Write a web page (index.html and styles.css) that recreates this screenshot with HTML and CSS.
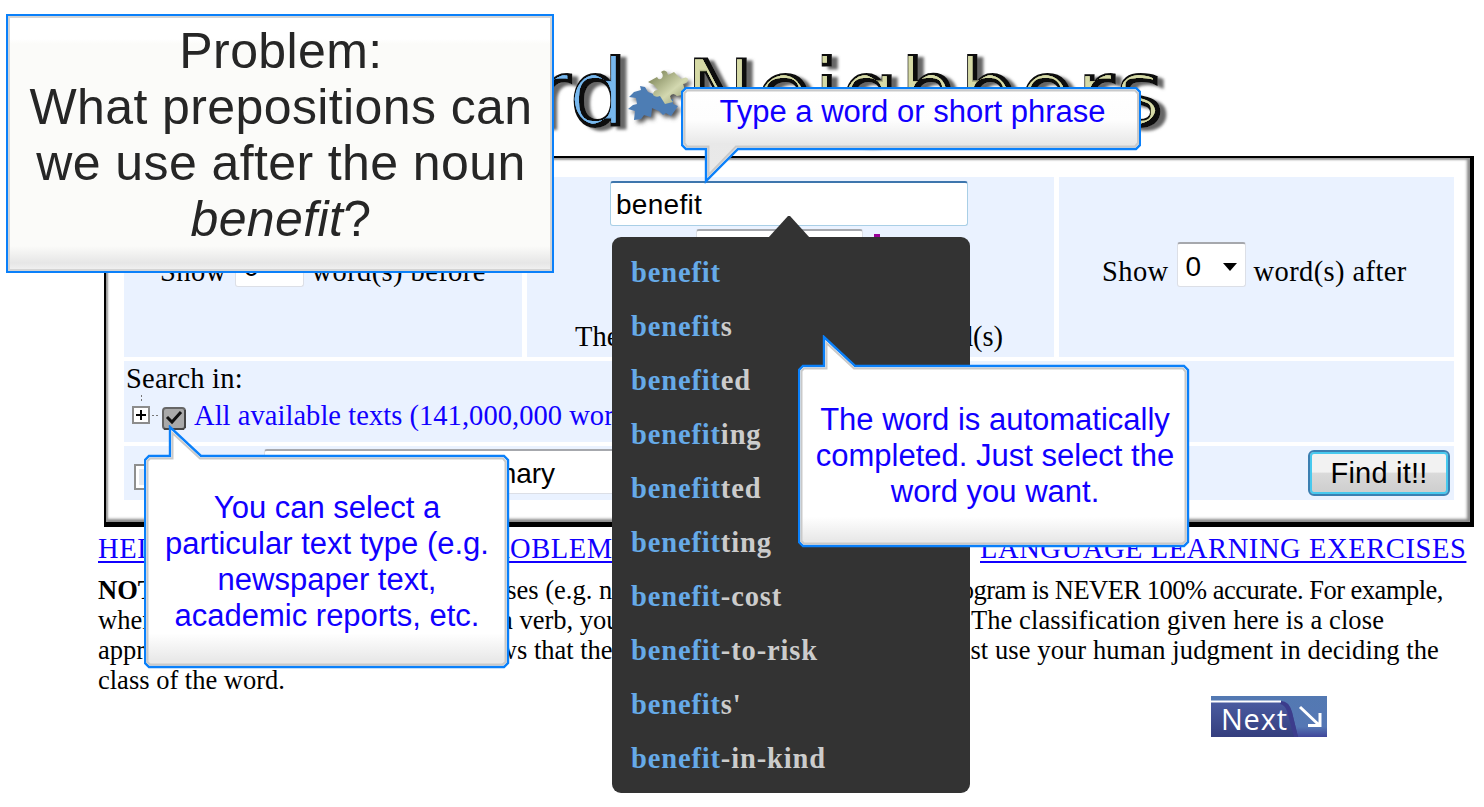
FILE: index.html
```html
<!DOCTYPE html>
<html lang="en">
<head>
<meta charset="utf-8">
<title>Word Neighbors</title>
<link rel="stylesheet" href="styles.css">
</head>
<body>
<div class="page">
  <header class="banner">
    <svg class="logo" width="1484" height="156" viewBox="0 0 1484 156" aria-label="Word Neighbors">
      <defs>
        <filter id="bevelBlue" x="-5%" y="-10%" width="112%" height="130%">
          <feOffset in="SourceAlpha" dx="6" dy="3" result="so"/>
          <feGaussianBlur in="so" stdDeviation="1.8" result="sb"/>
          <feFlood flood-color="#666"/><feComposite in2="sb" operator="in" result="shadow"/>
          <feMorphology in="SourceAlpha" operator="erode" radius="3" result="er"/>
          <feOffset in="er" dx="-1.6" dy="-1" result="eo"/>
          <feGaussianBlur in="eo" stdDeviation="0.6" result="eb"/>
          <feFlood flood-color="#78b8ee"/><feComposite in2="eb" operator="in" result="light"/>
          <feMerge><feMergeNode in="shadow"/><feMergeNode in="SourceGraphic"/><feMergeNode in="light"/><feMergeNode in="light"/></feMerge>
        </filter>
        <filter id="bevelOlive" x="-5%" y="-10%" width="112%" height="130%">
          <feOffset in="SourceAlpha" dx="6" dy="3" result="so"/>
          <feGaussianBlur in="so" stdDeviation="1.8" result="sb"/>
          <feFlood flood-color="#666"/><feComposite in2="sb" operator="in" result="shadow"/>
          <feMorphology in="SourceAlpha" operator="erode" radius="3" result="er"/>
          <feOffset in="er" dx="-1.6" dy="-1" result="eo"/>
          <feGaussianBlur in="eo" stdDeviation="0.6" result="eb"/>
          <feFlood flood-color="#d6daa6"/><feComposite in2="eb" operator="in" result="light"/>
          <feMerge><feMergeNode in="shadow"/><feMergeNode in="SourceGraphic"/><feMergeNode in="light"/><feMergeNode in="light"/></feMerge>
        </filter>
        <filter id="soft" x="-20%" y="-20%" width="150%" height="150%"><feDropShadow dx="3" dy="3" stdDeviation="2" flood-color="#555"/></filter>
        <linearGradient id="po" x1="0" y1="0" x2="1" y2="1"><stop offset="0" stop-color="#70784a"/><stop offset=".6" stop-color="#d3d8b0"/><stop offset="1" stop-color="#8c9268"/></linearGradient>
      </defs>
      <text class="logo-text" filter="url(#bevelBlue)" x="628" y="126" text-anchor="end">Word</text>
      <text class="logo-text" filter="url(#bevelOlive)" x="686" y="126" textLength="478">Neighbors</text>
      <g filter="url(#soft)">
        <path fill="#4d7db4" d="M634 92l7-2-1-4 5 1 3 5 22 8 3-1v5l5 2-7 10-5-3-3 2-4-4-7-3-1 9-7-2-3 4-7 1 1-9-7-2 5-4 4-1-1-6-7-1z"/>
        <path fill="url(#po)" d="M648 82l9-5q2 4 5 1 2-3-1-6 3-3 6 0l1 3 6-3 7 7q6-3 7 0 0 4-5 5l3 10-9 2q-4-4-7 0 0 3 3 6l-8 2-5-8q-4 2-7-1 0-5 5-5l-4-5z"/>
      </g>
    </svg>
  </header>

  <main class="panel">
    <section class="cell cell-before">
      <div class="show-line before-line"><span>Show</span><span class="select small">0<i class="caret"></i></span><span>word(s) before</span></div>
    </section>
    <section class="cell cell-word">
      <div class="word-input">benefit</div>
      <div class="pos-line"><span class="pos-select"></span><i class="pos-mark"></i></div>
      <div class="the-line"><span>The</span><span>word(s)</span></div>
    </section>
    <section class="cell cell-after">
      <div class="show-line after-line"><span>Show</span><span class="select small">0<i class="caret"></i></span><span>word(s) after</span></div>
    </section>
    <section class="cell cell-search">
      <div class="search-label">Search in:</div>
      <div class="tree-line">
        <svg width="64" height="38" viewBox="0 0 64 38">
          <path d="M17.500 0v8" stroke="#777" stroke-dasharray="2 2"/>
          <rect x="9" y="12" width="16" height="16" fill="#fff" stroke="#8c8c8c" stroke-width="2"/>
          <path d="M12 20h10M17 15v10" stroke="#000" stroke-width="2"/>
          <path d="M28 20.500h8" stroke="#777" stroke-dasharray="2 2"/>
          <rect x="39" y="13" width="22" height="21" rx="3" fill="#a9a9a9" stroke="#666" stroke-width="2"/>
          <path d="M40 34h20M61 15v18" stroke="#444" stroke-width="2"/>
          <path d="M43 22l5 5 9-10" fill="none" stroke="#111" stroke-width="3"/>
        </svg>
        <a>All available texts (141,000,000 words)</a>
      </div>
    </section>
    <section class="cell cell-find">
      <span class="box"></span>
      <span class="select wide">summary</span>
      <button class="find">Find it!!</button>
    </section>
  </main>

  <nav class="links"><a class="l1">HELP</a><a class="l2">PROBLEMS</a><a class="l3">LANGUAGE LEARNING EXERCISES</a></nav>

  <div class="note">
    <div class="row r1"><b>NOTE:</b><span>classes (e.g. n</span><span>program is NEVER 100% accurate. For example,</span></div>
    <div class="row r2"><span>when</span><span>a verb, you</span><span>The classification given here is a close</span></div>
    <div class="row r3"><span>appro</span><span>shows that the</span><span>must use your human judgment in deciding the</span></div>
    <div class="row r4">class of the word.</div>
  </div>

  <a class="next"><svg width="116" height="41" viewBox="0 0 116 41">
    <defs>
      <linearGradient id="n1" x1="0" y1="0" x2="0" y2="1"><stop offset="0" stop-color="#4a5ba0"/><stop offset="1" stop-color="#343e7e"/></linearGradient>
      <linearGradient id="n2" x1="0" y1="0" x2="0" y2="1"><stop offset="0" stop-color="#5379b2"/><stop offset=".75" stop-color="#5577b4"/><stop offset="1" stop-color="#40469a"/></linearGradient>
    </defs>
    <rect width="116" height="41" fill="url(#n2)"/>
    <path d="M0 6h70q8 0 11 10l6 25H0z" fill="url(#n1)"/>
    <path d="M70 5q8 0 11 11l6 25h-4l-7-26q-2-6-7-7z" fill="#3c3c8c"/>
    <path d="M0 5.500h70" stroke="#fff" stroke-width="2"/>
    <path d="M89 11l19 18M109 17v12.500H97" fill="none" stroke="#fff" stroke-width="3"/>
    <text x="10" y="34" class="next-text" textLength="66">Next</text>
  </svg></a>

  <div class="suggest">
    <svg class="suggest-tip" width="42" height="22" viewBox="0 0 42 22"><path d="M0 22L20 0h2L42 22z" fill="#333"/></svg>
    <ul>
      <li><em>benefit</em></li><li><em>benefit</em>s</li><li><em>benefit</em>ed</li><li><em>benefit</em>ing</li><li><em>benefit</em>ted</li><li><em>benefit</em>ting</li><li><em>benefit</em>-cost</li><li><em>benefit</em>-to-risk</li><li><em>benefit</em>s'</li><li><em>benefit</em>-in-kind</li>
    </ul>
  </div>

  <div class="problem">Problem:<br>What prepositions can<br>we use after the noun<br><i>benefit</i>?</div>

  <div class="callout c-type">
    <svg width="460" height="97" viewBox="0 0 460 97">
      <defs><linearGradient id="g" x1="0" y1="0" x2="0" y2="1"><stop offset="0" stop-color="#fff"/><stop offset=".35" stop-color="#fdfdfd"/><stop offset=".6" stop-color="#e8e8e8"/><stop offset="1" stop-color="#eaeaea"/></linearGradient></defs>
      <path class="edge" fill="url(#g)" d="M5 1H455l4 4V58l-4 4H57L25 94V62H5l-4-4V5z"/>
      <path class="inner" d="M6 3.500H454l3 3V56l-3 3.500H55L27.500 88V59.500H6L3.500 56V6z"/>
    </svg>
    <p>Type a word or short phrase</p>
  </div>
  <div class="callout c-text">
    <svg width="366" height="244" viewBox="0 0 366 244">
      <defs><linearGradient id="g2" x1="0" y1="0" x2="0" y2="1"><stop offset=".86" stop-color="#fff"/><stop offset=".97" stop-color="#e9e9e9"/></linearGradient></defs>
      <path class="edge" fill="url(#g2)" d="M5 31H26V2L57 31H360l4 4V238l-4 4H5l-4-4V35z"/>
      <path class="inner" d="M6 33.500H28.500V8L56 33.500H359l2.500 3V237l-3 2.500H6L3.500 237V36z"/>
    </svg>
    <p>You can select a<br>particular text type (e.g.<br>newspaper text,<br>academic reports, etc.</p>
  </div>
  <div class="callout c-auto">
    <svg width="392" height="213" viewBox="0 0 392 213">
      <path class="edge" fill="url(#g2)" d="M5 31H26V2L57 31H386l4 4V207l-4 4H5l-4-4V35z"/>
      <path class="inner" d="M6 33.500H28.500V8L56 33.500H385l2.500 3V206l-3 2.500H6L3.500 206V36z"/>
    </svg>
    <p>The word is automatically<br>completed. Just select the<br>word you want.</p>
  </div>
</div>
</body>
</html>
```
FILE: styles.css
```css
* { box-sizing: border-box; }
body { margin: 0; background: #fff; }
.page { position: relative; width: 1484px; height: 807px; overflow: hidden; font-family: "Liberation Serif", "Times New Roman", serif; font-size: 28.5px; line-height: 34px; color: #000; white-space: nowrap; }
.banner { height: 156px; }
.logo { display: block; }
.logo-text { font-family: "DejaVu Sans", sans-serif; font-size: 92px; fill: #080808; stroke: #080808; stroke-width: 1.8; }

.panel {
  margin-left: 104px; width: 1370px; height: 371px; padding: 19px 16px 21px 18px;
  border: solid #000; border-width: 2px 4px 5px 2px;
  box-shadow: inset 0 2px 2px #999, inset 2px 0 2px #999, inset -3px -3px 3px #888;
  display: grid; grid-template-columns: 398px 527px 395px; grid-template-rows: 180px 81px 54px; column-gap: 5px; row-gap: 4px;
}
.cell { background: #eaf2ff; overflow: hidden; }
.cell-search, .cell-find { grid-column: 1 / 4; }
.show-line { display: flex; align-items: flex-start; height: 45px; letter-spacing: .4px; }
.show-line > span { padding-top: 13px; }
.before-line { margin: 65px 0 0 36px; }
.after-line { margin: 65px 0 0 43px; }
.select { background: #fff; border: 1px solid #dcdfe6; border-top: 2px solid #a6a8ad; border-radius: 3px; font-family: "Liberation Sans", Arial, sans-serif; font-size: 28px; letter-spacing: 0; }
.show-line > .small { display: flex; width: 69px; height: 45px; margin: 0 8px; padding: 5px 8px 0 8px; justify-content: space-between; line-height: 36px; }
.caret { width: 0; height: 0; border: 7px solid transparent; border-top: 8px solid #000; border-bottom: 0; margin-top: 14px; }
.word-input { margin: 4px 0 0 83px; width: 358px; height: 45px; padding: 2px 0 0 5px; background: #fff; border: 1px solid #a9cfe6; border-top: 2px solid #3e76ad; border-radius: 3px; font: 28px/40px "Liberation Sans", Arial, sans-serif; letter-spacing: .3px; }
.pos-line { display: flex; margin: 3px 0 0 169px; height: 45px; }
.pos-select { width: 167px; background: #fff; border: 1px solid #dcdfe6; border-top: 2px solid #a6a8ad; border-radius: 3px; }
.pos-mark { width: 6px; height: 20px; margin: 5px 0 0 11px; background: #909; }
.the-line { display: flex; justify-content: space-between; margin: 46px 51px 0 48px; }
.search-label { padding: 1px 0 0 2px; height: 34px; letter-spacing: .2px; }
.tree-line { display: flex; height: 38px; }
.tree-line a { color: #10f; margin-left: 6px; padding-top: 4px; letter-spacing: .05px; }
.cell-find { display: flex; }
.box { flex: none; width: 26px; height: 26px; margin: 18px 0 0 10px; background: #e4e8ee; border: 2px solid #8e8f8f; box-shadow: inset 0 0 0 3px #fff; }
.wide { margin: 3px 0 0 104px; width: 500px; height: 45px; padding-left: 175px; line-height: 46px; }
.find { margin: 4px 4px 0 auto; width: 142px; height: 46px; padding: 0; border: 2px solid #3c7fb1; border-radius: 6px; box-shadow: inset 0 0 0 2px #48c9ee; background: linear-gradient(#f2f2f2 0 48%, #dadada 50%, #cdcdcd); font: 29px/38px "Liberation Sans", Arial, sans-serif; letter-spacing: .2px; color: #000; }

.links { display: grid; grid-template-columns: 376px 506px 1fr; margin: 5px 0 0 98px; font-size: 28.5px; line-height: 34px; letter-spacing: .6px; color: #10f; text-decoration: underline; text-decoration-thickness: 2px; text-underline-offset: 3px; }
.note { margin: 9px 0 0 98px; width: 1345px; font-size: 26.5px; line-height: 30px; }
.row { display: grid; grid-template-columns: 355px 455px 535px; }
.row > :nth-child(3) { justify-self: end; }
.row > :nth-child(2) { justify-self: start; }
.r1 > :nth-child(2) { padding-left: 12px; }
.r1 > :nth-child(3) { letter-spacing: -.5px; }
.r2 > :nth-child(2) { padding-left: 48px; }
.r2 > :nth-child(3) { padding-right: 59px; letter-spacing: .1px; }
.r3 > :nth-child(2) { padding-left: 8px; }
.r3 > :nth-child(3) { padding-right: 4px; letter-spacing: .1px; }
.next { position: absolute; left: 1211px; top: 696px; line-height: 0; }
.next-text { font-family: "Open Sans", "Noto Sans", sans-serif; font-size: 29px; fill: #fff; }

.suggest { position: absolute; left: 612px; top: 237px; width: 358px; height: 556px; background: #333; border-radius: 9px; }
.suggest-tip { position: absolute; left: 156px; top: -21px; }
.suggest ul { list-style: none; margin: 0; padding: 9px 0 0 19px; }
.suggest li { height: 54px; line-height: 54px; font-size: 28.5px; font-weight: bold; letter-spacing: .85px; color: #ccc; }
.suggest em { font-style: normal; color: #66aae8; }

.problem { position: absolute; left: 6px; top: 14px; width: 548px; height: 259px; padding-top: 7px; border: 2px solid #0a80fa; box-shadow: inset 0 0 0 2px #d4d4d4; background: linear-gradient(#fff 0 23px, #fbfbf9 28px 230px, #e6e6e6 247px, #f3f3f3); text-align: center; font: 50px/56px "Liberation Sans", Arial, sans-serif; letter-spacing: .4px; color: #262626; padding-left: 2px; }
.callout { position: absolute; }
.callout svg { display: block; }
.callout p { position: absolute; margin: 0; left: 0; right: 0; text-align: center; color: #10f; font: 31px/36px "Liberation Sans", Arial, sans-serif; }
.edge { stroke: #0a80fa; stroke-width: 2.4; }
.inner { fill: none; stroke: #c9c9c9; stroke-width: 2; }
.c-type { left: 681px; top: 87px; }
.c-type p { top: 7px; right: -3px; }
.c-text { left: 144px; top: 425px; }
.c-text p { top: 65px; }
.c-auto { left: 798px; top: 335px; }
.c-auto p { top: 67px; left: 2px; }
```
